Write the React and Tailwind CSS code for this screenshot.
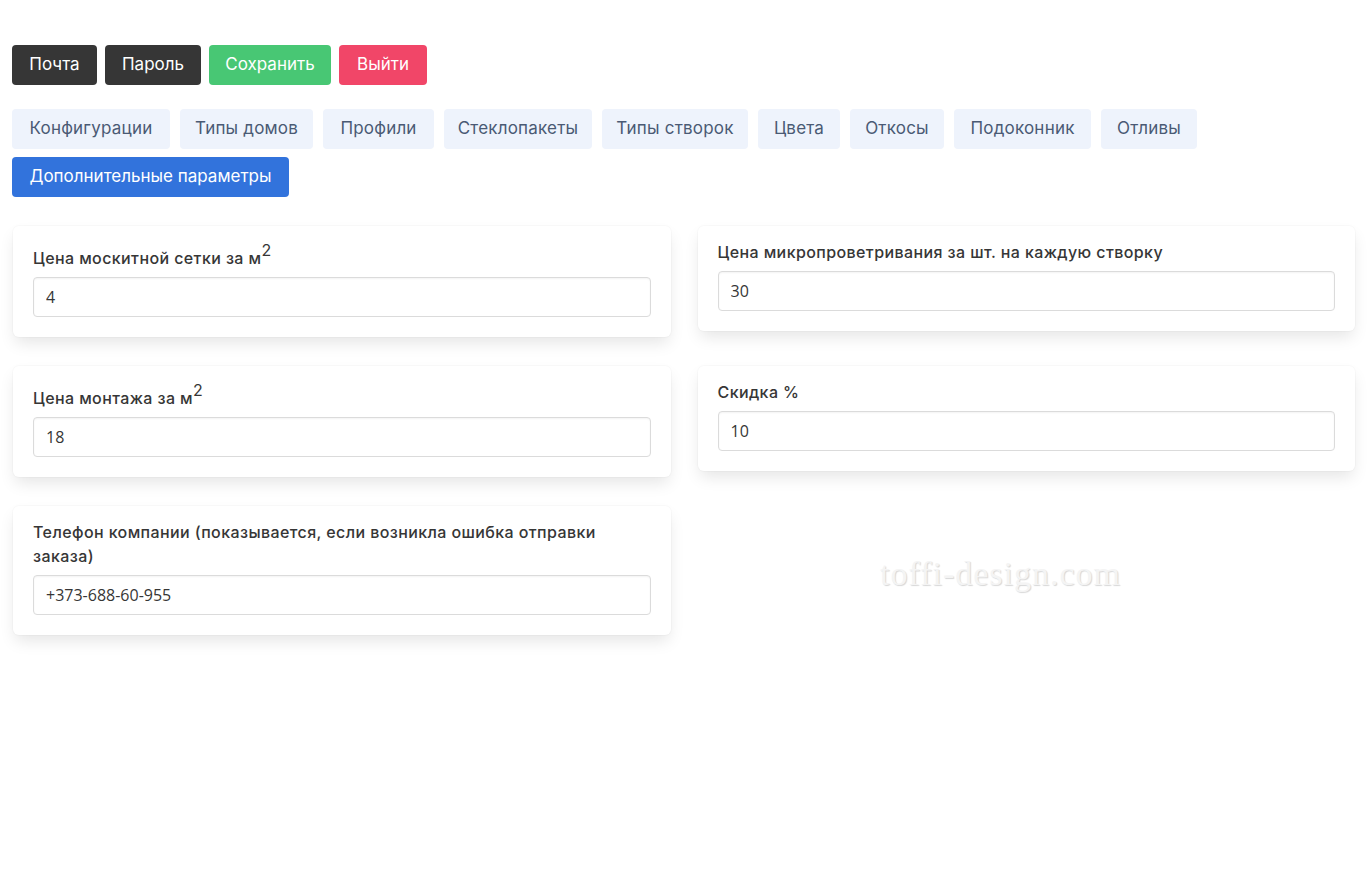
import React from "react";

const font = { fontFamily: "Inter, 'Noto Sans', sans-serif" };

function Field({ label, value }) {
  return (
    <div className="bg-white rounded-[6px] shadow-[0_8px_16px_-2px_rgba(10,10,10,0.1),0_0_0_1px_rgba(10,10,10,0.02)] pt-[14px] pb-5 px-5">
      <label className="block text-[16px] tracking-[0.4px] leading-[24px] font-medium text-[#363636] mb-[7px]">{label}</label>
      <input
        readOnly
        value={value}
        className="block w-full h-10 rounded-[4px] border border-[#dbdbdb] bg-white px-3 text-[16px] text-[#363636] shadow-[inset_0_1px_2px_rgba(10,10,10,0.05)] outline-none"
        style={{ fontFamily: "'Open Sans', 'Noto Sans', sans-serif" }}
      />
    </div>
  );
}

const M2 = ({ text }) => (
  <>
    {text}
    <span className="align-[8px] text-[16px] leading-[21px] font-normal">2</span>
  </>
);

export default function App() {
  const tabs = [
    ["Конфигурации", "w-[158px]"],
    ["Типы домов", "w-[133px]"],
    ["Профили", "w-[111px]"],
    ["Стеклопакеты", "w-[148px]"],
    ["Типы створок", "w-[146px]"],
    ["Цвета", "w-[82px]"],
    ["Откосы", "w-[94px]"],
    ["Подоконник", "w-[137px]"],
    ["Отливы", "w-[96px]"],
  ];
  return (
    <div className="relative min-h-[879px] bg-white" style={font}>
      <div className="pt-[45px] pl-3 pr-4">
        <div className="flex gap-2">
          <button className="w-[85px] h-10 rounded-[4px] bg-[#363636] text-white text-[17px] flex items-center justify-center">Почта</button>
          <button className="w-[96px] h-10 rounded-[4px] bg-[#363636] text-white text-[17px] flex items-center justify-center">Пароль</button>
          <button className="w-[122px] h-10 rounded-[4px] bg-[#48c774] text-white text-[17px] flex items-center justify-center">Сохранить</button>
          <button className="w-[88px] h-10 rounded-[4px] bg-[#f14668] text-white text-[17px] flex items-center justify-center">Выйти</button>
        </div>
        <div className="mt-6 flex flex-wrap gap-x-[10px] gap-y-2 w-[1200px]">
          {tabs.map(([t, w]) => (
            <button key={t} className={`${w} h-10 rounded-[4px] bg-[#eef3fc] text-[#4a5a74] text-[17px] tracking-[0.2px] flex items-center justify-center`}>{t}</button>
          ))}
        </div>
        <div className="mt-2">
          <button className="w-[277px] h-10 rounded-[4px] bg-[#3273dc] text-white text-[17px] flex items-center justify-center">Дополнительные параметры</button>
        </div>
        <div className="mt-[29px] pl-px grid grid-cols-2 gap-x-[27px] gap-y-[29px] items-start">
          <Field label={<M2 text="Цена москитной сетки за м" />} value="4" />
          <Field label="Цена микропроветривания за шт. на каждую створку" value="30" />
          <Field label={<M2 text="Цена монтажа за м" />} value="18" />
          <Field label="Скидка %" value="10" />
          <Field label="Телефон компании (показывается, если возникла ошибка отправки заказа)" value="+373-688-60-955" />
        </div>
      </div>
      <div
        className="absolute left-[880px] top-[557px] text-[34px] tracking-[1px] leading-none text-[#f4f4f4] select-none pointer-events-none"
        style={{ fontFamily: "'Liberation Serif', 'DejaVu Serif', serif", textShadow: "1px 1px 1px rgba(0,0,0,0.16), -1px -1px 0 rgba(255,255,255,0.9)" }}
      >
        toffi-design.com
      </div>
    </div>
  );
}
